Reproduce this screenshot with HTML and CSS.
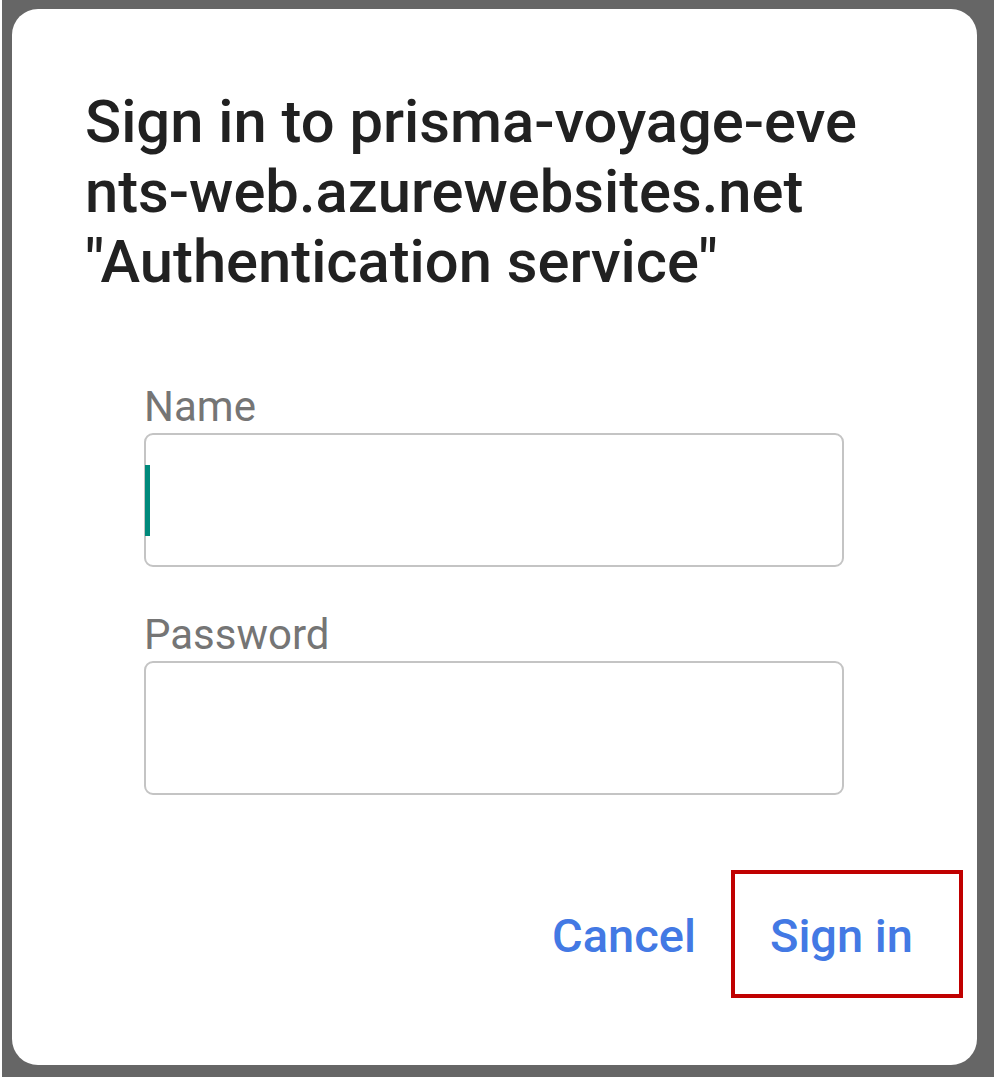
FILE: index.html
```html
<!DOCTYPE html>
<html>
<head>
<meta charset="utf-8">
<link rel="stylesheet" href="styles.css">
</head>
<body>
<div class="frame">
  <div class="dialog">
    <h1 class="title">Sign in to prisma-voyage-eve<br>nts-web.azurewebsites.net<br>"Authentication service"</h1>
    <div class="form">
      <label class="label">Name</label>
      <div class="input"><span class="caret"></span></div>
      <label class="label label-2">Password</label>
      <div class="input"></div>
    </div>
    <div class="actions">
      <span class="btn">Cancel</span>
      <span class="btn btn-primary">Sign in</span>
    </div>
  </div>
</div>
</body>
</html>
```
FILE: styles.css
```css
html, body {
  margin: 0;
  padding: 0;
  background: #ffffff;
}
body {
  font-family: Roboto, "Noto Sans", sans-serif;
}
.frame {
  width: 992px;
  height: 1077px;
  margin-left: 2px;
  box-sizing: border-box;
  background: #666666;
  padding: 9px 17px 12px 10px;
}
.dialog {
  height: 100%;
  background: #ffffff;
  border-radius: 26px;
  box-sizing: border-box;
  padding: 78px 0 0 73px;
  display: flex;
  flex-direction: column;
}
.title {
  margin: 0;
  font-size: 59.7px;
  line-height: 70px;
  font-weight: 500;
  color: #212121;
  letter-spacing: 0;
}
.form {
  display: flex;
  flex-direction: column;
  margin: 88px 0 0 59px;
  width: 700px;
}
.label {
  font-size: 42px;
  line-height: 44px;
  color: #757575;
  margin-bottom: 4px;
}
.label-2 {
  margin-top: 46px;
}
.input {
  height: 134px;
  box-sizing: border-box;
  border: 2px solid #c4c4c4;
  border-radius: 9px;
  display: flex;
  align-items: center;
}
.caret {
  width: 5px;
  height: 71px;
  background: #00897b;
  margin-left: -1px;
}
.actions {
  display: flex;
  justify-content: flex-end;
  align-items: center;
  margin-top: 75px;
  margin-right: 14px;
}
.btn {
  font-size: 47px;
  line-height: 56px;
  font-weight: 500;
  color: #4379e4;
  padding: 37px 45px 33px;
}
.btn-primary {
  border: 4px solid #c00000;
  padding: 34px 46px 30px 35px;
  margin-left: -10px;
}
```
